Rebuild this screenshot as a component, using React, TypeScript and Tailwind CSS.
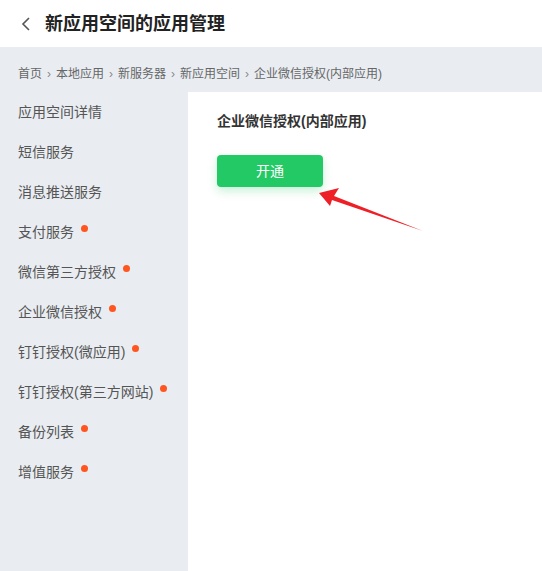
import React from "react";

const items: { label: string; dot: boolean }[] = [
  { label: "应用空间详情", dot: false },
  { label: "短信服务", dot: false },
  { label: "消息推送服务", dot: false },
  { label: "支付服务", dot: true },
  { label: "微信第三方授权", dot: true },
  { label: "企业微信授权", dot: true },
  { label: "钉钉授权(微应用)", dot: true },
  { label: "钉钉授权(第三方网站)", dot: true },
  { label: "备份列表", dot: true },
  { label: "增值服务", dot: true },
];

const crumbs = ["首页", "本地应用", "新服务器", "新应用空间", "企业微信授权(内部应用)"];

export default function App() {
  return (
    <div
      className="w-[542px] h-[571px] flex flex-col bg-[#e9edf2] overflow-hidden relative"
      style={{ fontFamily: '"Liberation Sans", "Noto Sans CJK SC", sans-serif' }}
    >
      <div className="h-[47px] bg-white flex items-center shrink-0">
        <svg width="10" height="16" viewBox="0 0 10 16" className="ml-[21px]">
          <path d="M8 2 L2 8 L8 14" fill="none" stroke="#555" strokeWidth="1.6" />
        </svg>
        <span className="ml-[14px] text-[18px] font-bold text-[#222] leading-none">新应用空间的应用管理</span>
      </div>
      <div className="h-[45px] shrink-0 flex items-center pl-[18px] pt-[8px] text-[12px] text-[#666]">
        {crumbs.map((c, i) => (
          <React.Fragment key={c}>
            {i > 0 && <span className="mx-[5px] text-[#888]">›</span>}
            <span>{c}</span>
          </React.Fragment>
        ))}
      </div>
      <div className="flex flex-1">
        <div className="w-[188px] shrink-0 flex flex-col">
          {items.map((it) => (
            <div key={it.label} className="h-10 flex items-center pl-[18px] text-[14px] text-[#555]">
              <span>{it.label}</span>
              {it.dot && <span className="ml-[7px] -mt-[7px] w-[7px] h-[7px] rounded-full bg-[#ff5620]" />}
            </div>
          ))}
        </div>
        <div className="flex-1 bg-white pl-[29px] pt-[19px]">
          <div className="text-[14px] font-bold text-[#333] leading-[20px]">企业微信授权(内部应用)</div>
          <button className="mt-[24px] w-[106px] h-[32px] rounded-[4px] bg-[#22c965] text-white text-[14px] shadow-[0_4px_10px_rgba(34,201,101,0.25)]">
            开通
          </button>
        </div>
      </div>
      <svg className="absolute left-0 top-0 pointer-events-none" width="542" height="571">
        <polygon points="319,193 339,188 334,196 423,231 332,200 330,206" fill="#ee1f26" />
      </svg>
    </div>
  );
}
